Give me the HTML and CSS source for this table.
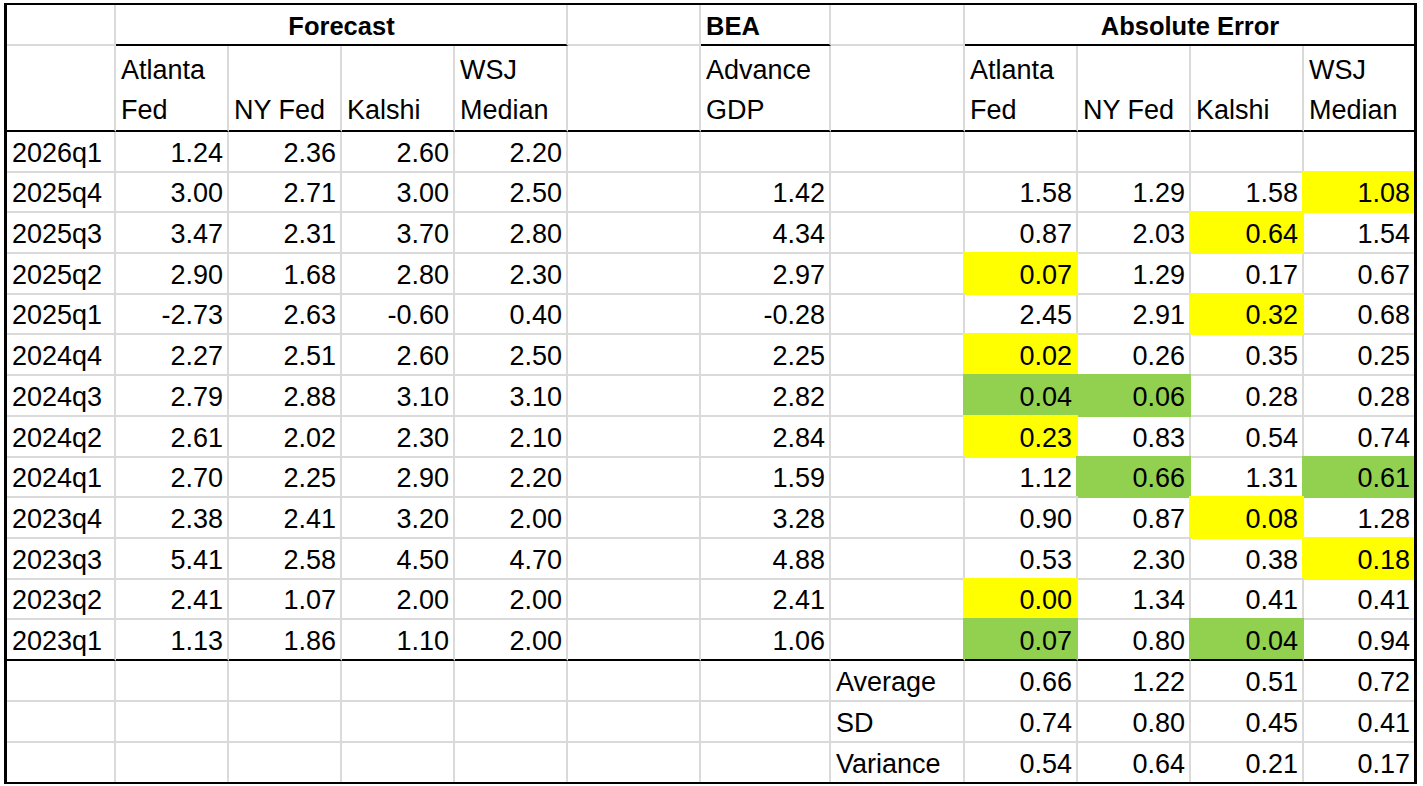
FILE: index.html
```html
<!DOCTYPE html>
<html lang="en">
<head>
<meta charset="utf-8">
<title>GDP Nowcast Accuracy</title>
<link rel="stylesheet" href="styles.css">
</head>
<body>
<div class="sheet">
  <!-- title row -->
  <div class="c"></div>
  <div class="c ttl span4 ul">Forecast</div>
  <div class="c"></div>
  <div class="c ttl left ul">BEA</div>
  <div class="c"></div>
  <div class="c ttl span4 ul nr">Absolute Error</div>

  <!-- column headers -->
  <div class="c hd bb"></div>
  <div class="c hd bb">Atlanta Fed</div>
  <div class="c hd bb">NY Fed</div>
  <div class="c hd bb">Kalshi</div>
  <div class="c hd bb">WSJ Median</div>
  <div class="c hd bb"></div>
  <div class="c hd bb">Advance GDP</div>
  <div class="c hd bb"></div>
  <div class="c hd bb">Atlanta Fed</div>
  <div class="c hd bb">NY Fed</div>
  <div class="c hd bb">Kalshi</div>
  <div class="c hd bb nr">WSJ Median</div>

  <!-- 2026q1 -->
  <div class="c">2026q1</div><div class="c num">1.24</div><div class="c num">2.36</div><div class="c num">2.60</div><div class="c num">2.20</div>
  <div class="c"></div><div class="c num"></div><div class="c"></div>
  <div class="c num"></div><div class="c num"></div><div class="c num"></div><div class="c num nr"></div>

  <!-- 2025q4 -->
  <div class="c">2025q4</div><div class="c num">3.00</div><div class="c num">2.71</div><div class="c num">3.00</div><div class="c num">2.50</div>
  <div class="c"></div><div class="c num">1.42</div><div class="c"></div>
  <div class="c num">1.58</div><div class="c num">1.29</div><div class="c num">1.58</div><div class="c num nr y">1.08</div>

  <!-- 2025q3 -->
  <div class="c">2025q3</div><div class="c num">3.47</div><div class="c num">2.31</div><div class="c num">3.70</div><div class="c num">2.80</div>
  <div class="c"></div><div class="c num">4.34</div><div class="c"></div>
  <div class="c num">0.87</div><div class="c num">2.03</div><div class="c num y">0.64</div><div class="c num nr">1.54</div>

  <!-- 2025q2 -->
  <div class="c">2025q2</div><div class="c num">2.90</div><div class="c num">1.68</div><div class="c num">2.80</div><div class="c num">2.30</div>
  <div class="c"></div><div class="c num">2.97</div><div class="c"></div>
  <div class="c num y">0.07</div><div class="c num">1.29</div><div class="c num">0.17</div><div class="c num nr">0.67</div>

  <!-- 2025q1 -->
  <div class="c">2025q1</div><div class="c num">-2.73</div><div class="c num">2.63</div><div class="c num">-0.60</div><div class="c num">0.40</div>
  <div class="c"></div><div class="c num">-0.28</div><div class="c"></div>
  <div class="c num">2.45</div><div class="c num">2.91</div><div class="c num y">0.32</div><div class="c num nr">0.68</div>

  <!-- 2024q4 -->
  <div class="c">2024q4</div><div class="c num">2.27</div><div class="c num">2.51</div><div class="c num">2.60</div><div class="c num">2.50</div>
  <div class="c"></div><div class="c num">2.25</div><div class="c"></div>
  <div class="c num y">0.02</div><div class="c num">0.26</div><div class="c num">0.35</div><div class="c num nr">0.25</div>

  <!-- 2024q3 -->
  <div class="c">2024q3</div><div class="c num">2.79</div><div class="c num">2.88</div><div class="c num">3.10</div><div class="c num">3.10</div>
  <div class="c"></div><div class="c num">2.82</div><div class="c"></div>
  <div class="c num g">0.04</div><div class="c num g">0.06</div><div class="c num">0.28</div><div class="c num nr">0.28</div>

  <!-- 2024q2 -->
  <div class="c">2024q2</div><div class="c num">2.61</div><div class="c num">2.02</div><div class="c num">2.30</div><div class="c num">2.10</div>
  <div class="c"></div><div class="c num">2.84</div><div class="c"></div>
  <div class="c num y">0.23</div><div class="c num">0.83</div><div class="c num">0.54</div><div class="c num nr">0.74</div>

  <!-- 2024q1 -->
  <div class="c">2024q1</div><div class="c num">2.70</div><div class="c num">2.25</div><div class="c num">2.90</div><div class="c num">2.20</div>
  <div class="c"></div><div class="c num">1.59</div><div class="c"></div>
  <div class="c num">1.12</div><div class="c num g">0.66</div><div class="c num">1.31</div><div class="c num nr g">0.61</div>

  <!-- 2023q4 -->
  <div class="c">2023q4</div><div class="c num">2.38</div><div class="c num">2.41</div><div class="c num">3.20</div><div class="c num">2.00</div>
  <div class="c"></div><div class="c num">3.28</div><div class="c"></div>
  <div class="c num">0.90</div><div class="c num">0.87</div><div class="c num y">0.08</div><div class="c num nr">1.28</div>

  <!-- 2023q3 -->
  <div class="c">2023q3</div><div class="c num">5.41</div><div class="c num">2.58</div><div class="c num">4.50</div><div class="c num">4.70</div>
  <div class="c"></div><div class="c num">4.88</div><div class="c"></div>
  <div class="c num">0.53</div><div class="c num">2.30</div><div class="c num">0.38</div><div class="c num nr y">0.18</div>

  <!-- 2023q2 -->
  <div class="c">2023q2</div><div class="c num">2.41</div><div class="c num">1.07</div><div class="c num">2.00</div><div class="c num">2.00</div>
  <div class="c"></div><div class="c num">2.41</div><div class="c"></div>
  <div class="c num y">0.00</div><div class="c num">1.34</div><div class="c num">0.41</div><div class="c num nr">0.41</div>

  <!-- 2023q1 -->
  <div class="c bb">2023q1</div><div class="c num bb">1.13</div><div class="c num bb">1.86</div><div class="c num bb">1.10</div><div class="c num bb">2.00</div>
  <div class="c bb"></div><div class="c num bb">1.06</div><div class="c bb"></div>
  <div class="c num g bb">0.07</div><div class="c num bb">0.80</div><div class="c num g bb">0.04</div><div class="c num nr bb">0.94</div>

  <!-- summary -->
  <div class="c"></div><div class="c"></div><div class="c"></div><div class="c"></div><div class="c"></div><div class="c"></div><div class="c"></div>
  <div class="c">Average</div><div class="c num">0.66</div><div class="c num">1.22</div><div class="c num">0.51</div><div class="c num nr">0.72</div>

  <div class="c"></div><div class="c"></div><div class="c"></div><div class="c"></div><div class="c"></div><div class="c"></div><div class="c"></div>
  <div class="c">SD</div><div class="c num">0.74</div><div class="c num">0.80</div><div class="c num">0.45</div><div class="c num nr">0.41</div>

  <div class="c nb"></div><div class="c nb"></div><div class="c nb"></div><div class="c nb"></div><div class="c nb"></div><div class="c nb"></div><div class="c nb"></div>
  <div class="c nb">Variance</div><div class="c num nb">0.54</div><div class="c num nb">0.64</div><div class="c num nb">0.21</div><div class="c num nr nb">0.17</div>
</div>
</body>
</html>
```

FILE: styles.css
```css
* {
  box-sizing: border-box;
}

html,
body {
  margin: 0;
  background: #fff;
}

body {
  font-family: "Liberation Sans", Arial, sans-serif;
  color: #000;
}

.sheet {
  display: grid;
  width: max-content;
  margin: 3px 0 0 4px;
  border: 2px solid #000;
  border-left-width: 3px;
  border-right-width: 3px;
  overflow: hidden;
  grid-template-columns: 109px 113px 113px 113px 113px 133px 130px 134px 113px 113px 113px 110px;
  grid-template-rows: 41px 86px repeat(13, 40.7px) 41px 41px 38.9px;
}

.c {
  display: flex;
  align-items: flex-end;
  justify-content: flex-start;
  min-width: 0;
  padding: 0 4px 2px 5px;
  border-right: 2px solid #dadada;
  border-bottom: 2px solid #dadada;
  background: #fff;
  font-size: 27px;
  line-height: 31px;
  white-space: nowrap;
}

.num {
  justify-content: flex-end;
}

.ttl {
  justify-content: center;
  font-size: 25.5px;
  font-weight: 700;
}

.ttl.left {
  justify-content: flex-start;
}

.span4 {
  grid-column: span 4;
}

.hd {
  padding-bottom: 0;
  line-height: 40px;
  white-space: normal;
}

.y {
  background: #ffff00;
  border-right-color: #ffff00;
  border-bottom-color: #ffff00;
  box-shadow: -2px -2px 0 #ffff00, 0 -2px 0 #ffff00;
}

.g {
  background: #92d050;
  border-right-color: #92d050;
  border-bottom-color: #92d050;
  box-shadow: -2px -2px 0 #92d050, 0 -2px 0 #92d050;
}

.ul,
.bb {
  border-bottom-color: #000;
}

.nr {
  border-right: none;
}

.nb {
  border-bottom: none;
}
```
